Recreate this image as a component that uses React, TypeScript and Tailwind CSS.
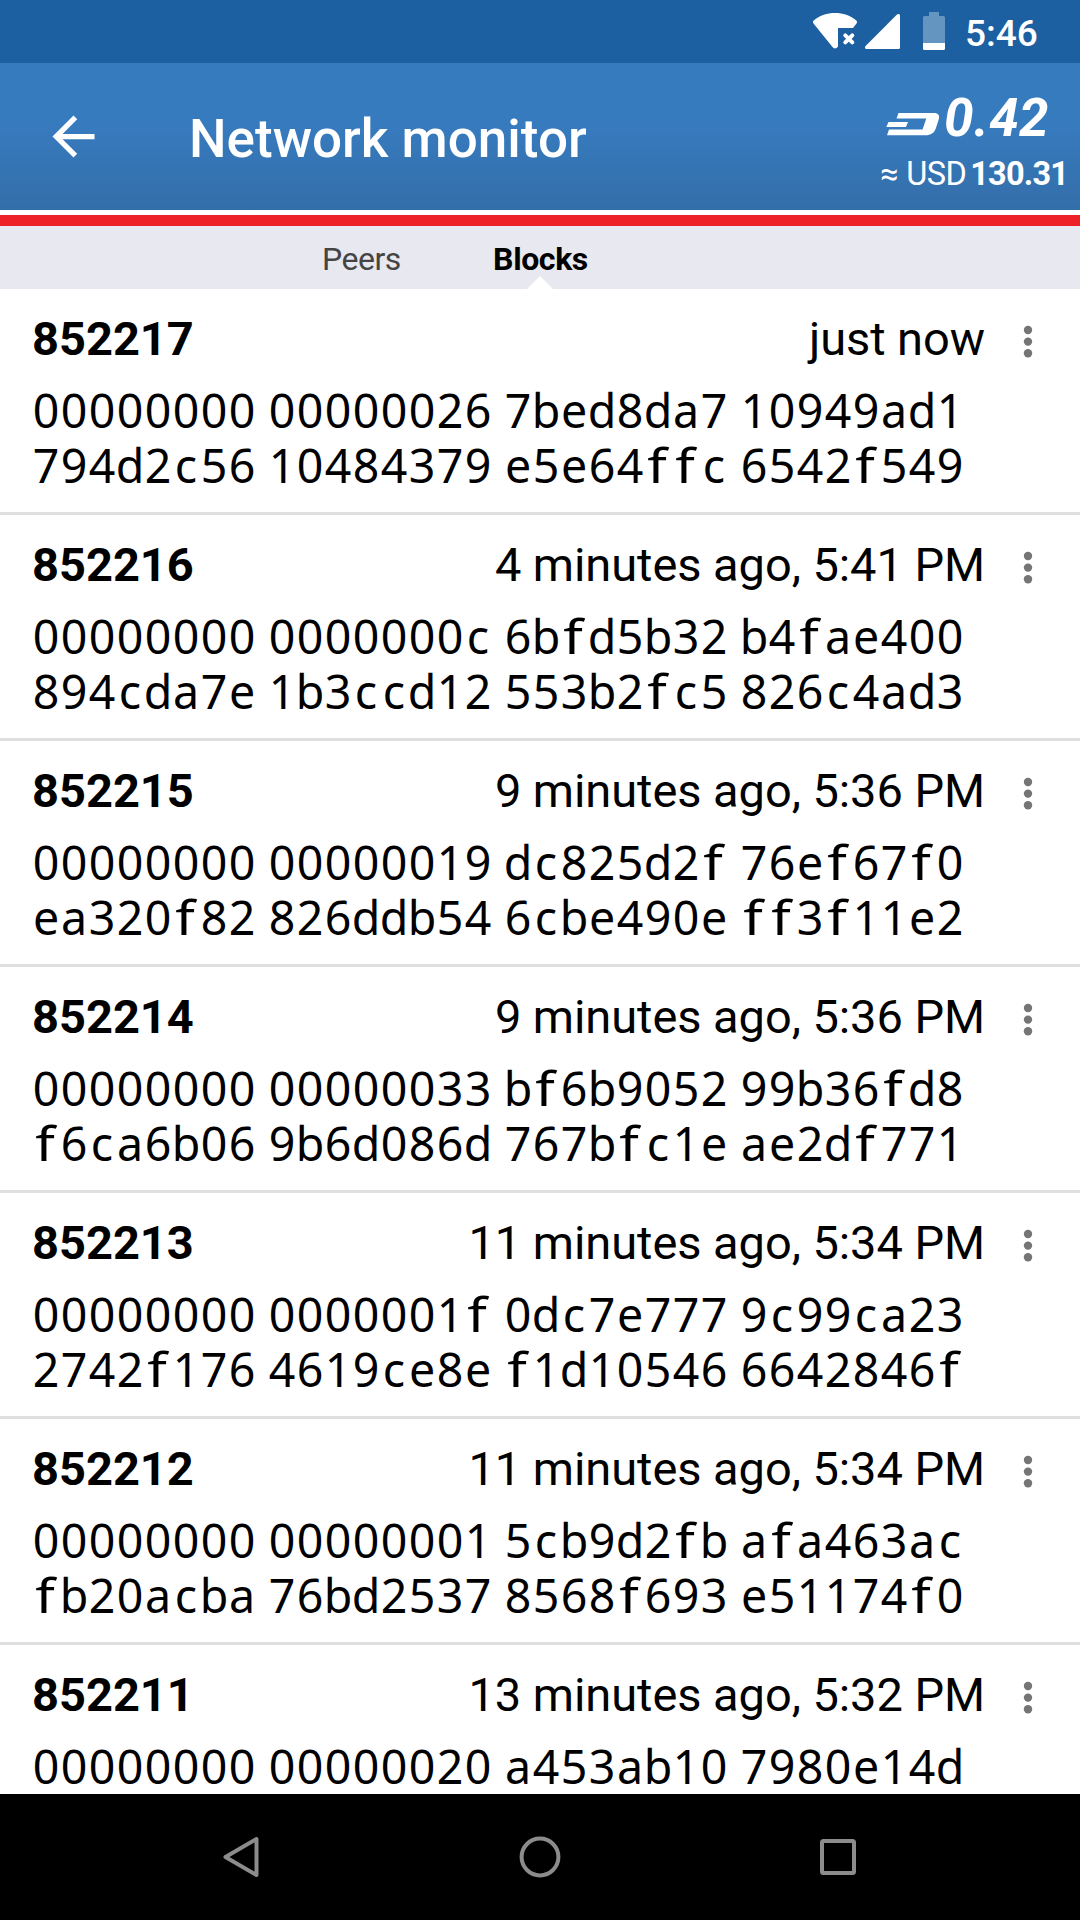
type Block = { height: string; time: string; hash: string[] };

const blocks: Block[] = [
  { height: "852217", time: "just now", hash: ["00000000 00000026 7bed8da7 10949ad1", "794d2c56 10484379 e5e64ffc 6542f549"] },
  { height: "852216", time: "4 minutes ago, 5:41 PM", hash: ["00000000 0000000c 6bfd5b32 b4fae400", "894cda7e 1b3ccd12 553b2fc5 826c4ad3"] },
  { height: "852215", time: "9 minutes ago, 5:36 PM", hash: ["00000000 00000019 dc825d2f 76ef67f0", "ea320f82 826ddb54 6cbe490e ff3f11e2"] },
  { height: "852214", time: "9 minutes ago, 5:36 PM", hash: ["00000000 00000033 bf6b9052 99b36fd8", "f6ca6b06 9b6d086d 767bfc1e ae2df771"] },
  { height: "852213", time: "11 minutes ago, 5:34 PM", hash: ["00000000 0000001f 0dc7e777 9c99ca23", "2742f176 4619ce8e f1d10546 6642846f"] },
  { height: "852212", time: "11 minutes ago, 5:34 PM", hash: ["00000000 00000001 5cb9d2fb afa463ac", "fb20acba 76bd2537 8568f693 e51174f0"] },
  { height: "852211", time: "13 minutes ago, 5:32 PM", hash: ["00000000 00000020 a453ab10 7980e14d"] },
];

function StatusBar() {
  return (
    <div className="flex h-[63px] shrink-0 items-start bg-[#1c60a1] pl-[812px] text-white">
      <svg className="mt-[12px] h-[38px] w-[46px]" viewBox="0 0 46 38" fill="white">
        <path d="M1.5 11.5C0.6 10.4 0.8 9 2 8.2C8 3.2 15 1 23 1s15 2.200 21 7.200c1.200 .8 1.400 2.200 .5 3.300L41 16H26v18.500c-1.500 2.500-4.300 2.500-5.500 .5z" />
        <path d="M33.300 23.300l7 7M40.300 23.300l-7 7" stroke="white" strokeWidth="4" strokeLinecap="round" />
      </svg>
      <svg className="mt-[12px] ml-[6px] h-[38px] w-[37px]" viewBox="0 0 37 38" fill="white">
        <path d="M1.600 34L33 2.600C34.300 1.400 36 2 36 3.800V35.500q0 1.500-1.500 1.500H2.600C.8 37 .4 35.300 1.600 34z" />
      </svg>
      <svg className="mt-[12px] ml-[22px] h-[38px] w-[22px]" viewBox="0 0 22 38">
        <path d="M6 0h10v4h4.500q1.500 0 1.500 1.500V31H0V5.500Q0 4 1.500 4H6z" fill="#6495c1" />
        <path d="M0 31h22v5.500q0 1.500-1.500 1.500h-19Q0 38 0 36.500z" fill="white" />
      </svg>
      <span className="mt-[12px] ml-[20px] text-[37px] leading-[44px] font-medium">5:46</span>
    </div>
  );
}

function Header() {
  return (
    <header className="flex h-[147px] shrink-0 bg-linear-to-b from-[#377bbf] from-40% to-[#336ea9] text-white">
      <svg className="mt-[42px] ml-[42px] size-[63px]" viewBox="0 0 24 24" fill="white">
        <path d="M20 11H7.830l5.590-5.590L12 4l-8 8 8 8 1.410-1.410L7.830 13H20v-2z" />
      </svg>
      <h1 className="mt-[44px] ml-[84px] text-[53px] leading-[64px] font-medium whitespace-nowrap">Network monitor</h1>
      <div className="ml-auto flex flex-col">
        <div className="mt-[23px] flex pl-[6px]">
          <svg className="mt-[26px] h-[24px] w-[54px]" viewBox="0 0 54 24" fill="white">
            <path d="M12.500 1H48c4.200 0 6 2.500 4.800 6.200l-3 9.300C48.200 21 44.500 23.300 40 23.300H1L3 17.500H36.500L40.300 6.500H10.500z" />
            <path d="M2.500 10H22l-2 5H.3z" />
          </svg>
          <span className="ml-[4px] text-[53px] leading-[64px] font-bold tracking-[0.4px] italic">0.42</span>
        </div>
        <div className="mt-[4px] flex w-[200px] text-[32.500px] leading-[40px] whitespace-nowrap">
          <span className="mr-[8px]">≈</span>
          <span className="tracking-[-0.6px]">USD</span>
          <span className="ml-[4px] font-bold tracking-[-0.8px]">130.31</span>
        </div>
      </div>
    </header>
  );
}

function Tabs() {
  return (
    <nav className="flex h-[63px] shrink-0 bg-[#e8e8f0] text-[32px] leading-[38px]">
      <span className="mt-[14px] ml-[322px] w-[170px] tracking-[-0.5px] text-[#444]">Peers</span>
      <div className="relative flex h-full w-[97px] justify-center">
        <span className="mt-[14px] font-bold tracking-[-0.4px] text-black">Blocks</span>
        <svg className="absolute bottom-0 left-[35px] h-[13px] w-[26px]" viewBox="0 0 26 13" fill="white">
          <path d="M13 0L26 13H0z" />
        </svg>
      </div>
    </nav>
  );
}

// Lays a proportional face out on a fixed 28px pitch, one cell per character.
function HashLine({ text }: { text: string }) {
  return (
    <div className="flex h-[55px] gap-[12px] font-['Noto_Sans','Open_Sans',sans-serif] text-[46.500px] leading-[55px]">
      {text.split(" ").map((group, g) => (
        <span key={g} className="flex">
          {group.split("").map((c, i) => (
            <span key={i} className={c === "f" ? "flex w-[28px] -translate-x-px scale-x-122 justify-center" : "flex w-[28px] justify-center"}>
              {c}
            </span>
          ))}
        </span>
      ))}
    </div>
  );
}

function BlockRow({ block }: { block: Block }) {
  return (
    <li className="h-[226px] shrink-0 border-b-[3px] border-[#dfdfdf] pt-[22px] pl-[32px]">
      <div className="flex h-[56px] text-[47px] leading-[56px] whitespace-nowrap">
        <span className="font-bold">{block.height}</span>
        <span className="mr-[38px] ml-auto tracking-[-0.06px]">{block.time}</span>
        <svg className="mt-[14px] mr-[47px] h-[34px] w-[10px]" viewBox="0 0 10 34" fill="#757575">
          <circle cx="5" cy="5" r="4.200" />
          <circle cx="5" cy="16.600" r="4.200" />
          <circle cx="5" cy="28.300" r="4.200" />
        </svg>
      </div>
      <div className="mt-[16px]">
        {block.hash.map((line) => (
          <HashLine key={line} text={line} />
        ))}
      </div>
    </li>
  );
}

function NavigationBar() {
  return (
    <div className="flex h-[126px] shrink-0 items-center bg-black pl-[220px]">
      <svg className="size-[42px]" viewBox="0 0 42 42" fill="none" stroke="#8c8c8c" strokeWidth="4" strokeLinejoin="round">
        <path d="M36.500 3V39L5.500 21z" />
      </svg>
      <svg className="ml-[257px] size-[42px]" viewBox="0 0 42 42" fill="none" stroke="#8c8c8c" strokeWidth="4">
        <circle cx="21" cy="21" r="18.400" />
      </svg>
      <svg className="ml-[256px] size-[42px]" viewBox="0 0 42 42" fill="none" stroke="#8c8c8c" strokeWidth="4">
        <rect x="5" y="5" width="32" height="32" rx="1.500" />
      </svg>
    </div>
  );
}

export default function App() {
  return (
    <div className="flex h-[1920px] w-[1080px] flex-col overflow-hidden bg-white font-['Roboto',sans-serif] text-black">
      <StatusBar />
      <Header />
      <div className="h-[16px] shrink-0 border-t-[5px] border-white bg-[#ee2128]" />
      <Tabs />
      <ul className="flex min-h-0 flex-1 flex-col overflow-hidden">
        {blocks.map((b) => (
          <BlockRow key={b.height} block={b} />
        ))}
      </ul>
      <NavigationBar />
    </div>
  );
}
